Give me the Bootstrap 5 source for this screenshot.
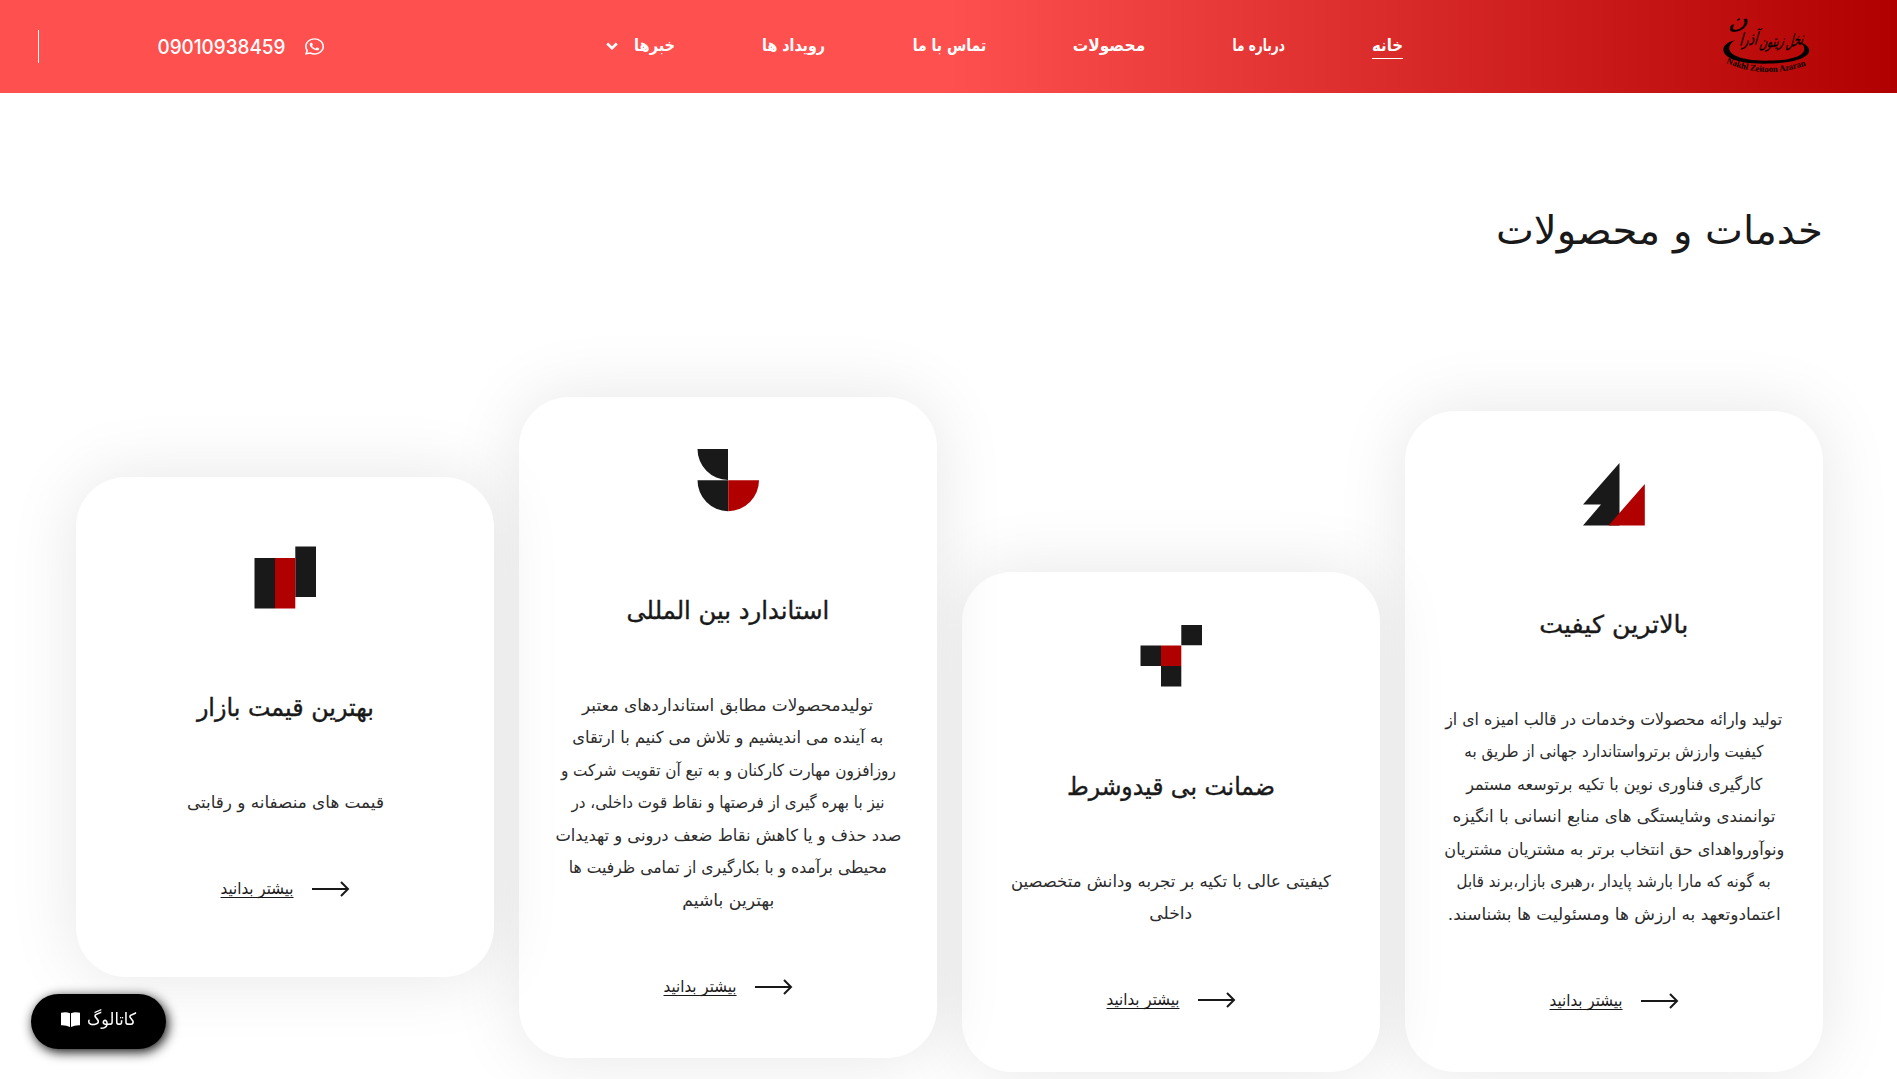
<!DOCTYPE html>
<html lang="fa" dir="rtl">
<head>
<meta charset="utf-8">
<title>خدمات و محصولات</title>
<link rel="stylesheet" href="https://cdn.jsdelivr.net/npm/bootstrap@5.3.0/dist/css/bootstrap.min.css">
<script src="https://cdn.jsdelivr.net/npm/bootstrap@5.3.0/dist/js/bootstrap.bundle.min.js"></script>
<style>
html,body{height:100%;overflow:hidden}
body{font-family:"DejaVu Sans Condensed","DejaVu Sans",sans-serif;color:#191919;background:#fff}
[data-w]{display:inline-block;transform-origin:right center;white-space:nowrap}
.topbar{height:93px;background:linear-gradient(to left,#b00000 0,#ff5050 50%);color:#fff;padding:0 85px 0 38px}
.brand-logo{width:92px;height:64px;margin-bottom:7px;overflow:visible}
.main-menu{gap:87px;margin-right:317px;font-size:16.6px;font-weight:700}
.main-menu a{color:#fff;display:flex;line-height:24px;border-bottom:1px solid transparent}
.main-menu a.current{border-color:#fff}
.chevron{width:12px;height:8px;margin:8px 17px 0 0}
.phone{font-family:Inter,sans-serif;font-size:20px;font-weight:500;line-height:24px;gap:20px;margin-left:118px}
.divider{width:1px;height:33px;background:#fff}
.services{padding:0 74px 0 76px}
.services h1{font-size:39px;font-weight:400;line-height:56px;margin:110px 0 138px}
.cards{gap:25px}
.service{width:418px;min-height:500px;border-radius:50px;background:#fff;box-shadow:0 0 70px rgba(0,0,0,.1);padding:52px 15px 54px}
.quality{margin-top:14px}.guarantee{margin-top:175px}.price{margin-top:80px}
.shape{width:62px;height:62px;overflow:visible}
.service h2{font-size:24.5px;line-height:40px;margin:79.5px 0 59px;font-weight:400;-webkit-text-stroke:.35px}
.service p{font-size:16.5px;line-height:32.5px;margin:0 0 52.5px;color:#2c2c2c}
.more{font-size:16px;line-height:34px;gap:18px;color:#191919;text-decoration:none}
.more span{text-decoration:underline;text-underline-offset:3px;text-decoration-thickness:1px;text-decoration-skip-ink:none}
.arrow{width:38px;height:16px}
.catalog{left:31px;bottom:30px;width:135px;height:55px;border-radius:28px;background:#000;color:#fff;font-size:17px;box-shadow:2px 3px 12px rgba(0,0,0,.95);gap:7px;padding-bottom:4px}
.catalog:hover{color:#fff}
</style>
</head>
<body>
<header class="topbar d-flex align-items-center">
<svg class="brand-logo flex-shrink-0" viewBox="1720 10 92 64" direction="rtl">
<path transform="translate(1700 0) scale(.3333)" d="M105 118C48 130 50 188 192 188C342 188 350 140 300 124C326 142 322 179 197 179C82 177 70 140 105 118Z"/>
<g font-family="DejaVu Sans Condensed,DejaVu Sans,sans-serif" text-anchor="middle" stroke="#000" stroke-width=".2">
<text transform="translate(1794 45) rotate(-14) skewX(-28) scale(.75 1)" font-size="16">نخل</text>
<text transform="translate(1771 46) rotate(-6) skewX(-24) scale(.85 1.15)" font-size="14">زیتون</text>
<text transform="translate(1748 44) rotate(-4) skewX(-20) scale(.8 1)" font-size="17">آذرا</text>
<text transform="translate(1738 27) rotate(-14) skewX(-24) scale(1.7 1)" font-size="19">ن</text>
</g>
<path id="arc" d="M1726 62Q1766 79 1807 64" fill="none"/>
<text direction="ltr" font-family="Liberation Serif,serif" font-weight="700" font-size="8.8"><textPath href="#arc" textLength="82" lengthAdjust="spacingAndGlyphs">Nakhl Zeitoon Azaran</textPath></text>
</svg>
<nav class="main-menu d-flex align-items-center">
<a class="current text-decoration-none" href="#"><span data-w="31">خانه</span></a>
<a class="text-decoration-none" href="#"><span data-w="52.5">درباره ما</span></a>
<a class="text-decoration-none" href="#"><span data-w="72.5">محصولات</span></a>
<a class="text-decoration-none" href="#"><span data-w="73.5">تماس با ما</span></a>
<a class="text-decoration-none" href="#"><span data-w="63">رویداد ها</span></a>
<a class="text-decoration-none" href="#"><span data-w="41">خبرها</span><svg class="chevron" viewBox="0 0 12 8"><path d="M1.200 1.500L6 6.200L10.800 1.500" fill="none" stroke="#fff" stroke-width="2.600"/></svg></a>
</nav>
<div class="phone d-flex align-items-center me-auto">
<svg width="19" height="19" viewBox="0 0 448 512" preserveAspectRatio="none" fill="#fff"><path d="M380.900 97.100C339 55.100 283.200 32 223.900 32c-122.400 0-222 99.600-222 222 0 39.100 10.200 77.300 29.600 111L0 480l117.700-30.900c32.400 17.700 68.900 27 106.100 27h.1c122.300 0 224.100-99.600 224.100-222 0-59.300-25.200-115-67.100-157zm-157 341.600c-33.200 0-65.700-8.900-94-25.700l-6.700-4-69.800 18.300L72 359.200l-4.400-7c-18.500-29.400-28.200-63.300-28.200-98.200 0-101.700 82.800-184.500 184.600-184.500 49.300 0 95.600 19.200 130.400 54.100 34.800 34.900 56.200 81.200 56.100 130.500 0 101.800-84.900 184.600-186.600 184.600zm101.200-138.200c-5.500-2.800-32.800-16.200-37.900-18-5.100-1.900-8.800-2.800-12.500 2.800-3.700 5.600-14.300 18-17.600 21.800-3.200 3.700-6.500 4.200-12 1.400-32.600-16.300-54-29.100-75.500-66-5.700-9.800 5.700-9.100 16.300-30.300 1.800-3.700.9-6.900-.5-9.700-1.400-2.800-12.500-30.100-17.100-41.200-4.500-10.800-9.100-9.300-12.500-9.500-3.200-.2-6.900-.2-10.600-.2-3.700 0-9.700 1.400-14.800 6.900-5.100 5.600-19.400 19-19.400 46.300 0 27.300 19.900 53.700 22.600 57.400 2.800 3.700 39.100 59.700 94.800 83.800 35.200 15.200 49 16.500 66.600 13.900 10.700-1.600 32.800-13.400 37.400-26.400 4.600-13 4.600-24.100 3.200-26.400-1.300-2.500-5-3.900-10.500-6.600z"/></svg>
<span data-w="128" dir="ltr">09010938459</span>
</div>
<div class="divider"></div>
</header>
<main class="services">
<h1><span data-w="327">خدمات و محصولات</span></h1>
<div class="cards d-flex align-items-start">
<section class="service quality d-flex flex-column align-items-center justify-content-center text-center">
<svg class="shape" viewBox="0 0 62 62"><path fill="#191919" d="M36.500 0V62.500H0L18 41.500H0Z"/><path fill="#b00000" d="M61.800 21V62.500H25.500Z"/></svg>
<h2><span data-w="149">بالاترین کیفیت</span></h2>
<p><span data-w="337">تولید وارائه محصولات وخدمات در قالب امیزه ای از</span><br><span data-w="299">کیفیت وارزش برترواستاندارد جهانی از طریق به</span><br><span data-w="296">کارگیری فناوری نوین با تکیه برتوسعه مستمر</span><br><span data-w="323">توانمندی وشایستگی های منابع انسانی با انگیزه</span><br><span data-w="340">ونوآورواهدای حق انتخاب برتر به مشتریان مشتریان</span><br><span data-w="314">به گونه که مارا بارشد پایدار ،رهبری بازار،برند قابل</span><br><span data-w="333">اعتمادوتعهد به ارزش ها ومسئولیت ها بشناسند.</span></p>
<a class="more d-flex align-items-center" href="#"><svg class="arrow" viewBox="0 0 38 16"><path d="M0 8H36M29 1L36 8L29 15" fill="none" stroke="#191919" stroke-width="2"/></svg><span data-w="73">بیشتر بدانید</span></a>
</section>
<section class="service guarantee d-flex flex-column align-items-center justify-content-center text-center">
<svg class="shape" viewBox="0 0 62 62"><path fill="#191919" d="M41.300 0H62V20.300H41.300ZM.5 20.500H21V41H.5ZM21 41H41.300V61.500H21Z"/><path fill="#b00000" d="M21 20.500H41.300V41H21Z"/></svg>
<h2><span data-w="208">ضمانت بی قیدوشرط</span></h2>
<p><span data-w="320">کیفیتی عالی با تکیه بر تجربه ودانش متخصصین</span><br><span data-w="43">داخلی</span></p>
<a class="more d-flex align-items-center" href="#"><svg class="arrow" viewBox="0 0 38 16"><path d="M0 8H36M29 1L36 8L29 15" fill="none" stroke="#191919" stroke-width="2"/></svg><span data-w="73">بیشتر بدانید</span></a>
</section>
<section class="service standard d-flex flex-column align-items-center justify-content-center text-center">
<svg class="shape" viewBox="0 0 62 62"><path fill="#191919" d="M.5 0H31V31A31 31 0 0 1 .5 0ZM.5 31.200H31V62.200A31 31 0 0 1 .5 31.200Z"/><path fill="#b00000" d="M31.200 31.200H62A31 31 0 0 1 31.200 62.200Z"/></svg>
<h2><span data-w="203">استاندارد بین المللی</span></h2>
<p><span data-w="291">تولیدمحصولات مطابق استانداردهای معتبر</span><br><span data-w="311">به آینده می اندیشیم و تلاش می کنیم با ارتقای</span><br><span data-w="335">روزافزون مهارت کارکنان و به تبع آن تقویت شرکت و</span><br><span data-w="313">نیز با بهره گیری از فرصتها و نقاط قوت داخلی، در</span><br><span data-w="346">صدد حذف و یا کاهش نقاط ضعف درونی و تهدیدات</span><br><span data-w="318">محیطی برآمده و با بکارگیری از تمامی ظرفیت ها</span><br><span data-w="92">بهترین باشیم</span></p>
<a class="more d-flex align-items-center" href="#"><svg class="arrow" viewBox="0 0 38 16"><path d="M0 8H36M29 1L36 8L29 15" fill="none" stroke="#191919" stroke-width="2"/></svg><span data-w="73">بیشتر بدانید</span></a>
</section>
<section class="service price d-flex flex-column align-items-center justify-content-center text-center">
<svg class="shape" viewBox="0 0 62 62"><path fill="#191919" d="M41.300 .5H62V51H41.300ZM.5 12H21V62.500H.5Z"/><path fill="#b00000" d="M21 12H41.300V62.500H21Z"/></svg>
<h2><span data-w="177">بهترین قیمت بازار</span></h2>
<p><span data-w="197">قیمت های منصفانه و رقابتی</span></p>
<a class="more d-flex align-items-center" href="#"><svg class="arrow" viewBox="0 0 38 16"><path d="M0 8H36M29 1L36 8L29 15" fill="none" stroke="#191919" stroke-width="2"/></svg><span data-w="73">بیشتر بدانید</span></a>
</section>
</div>
</main>
<a class="catalog position-fixed d-flex align-items-center justify-content-center text-decoration-none" href="#"><span data-w="49">کاتالوگ</span><svg width="19" height="15" viewBox="0 0 19 15"><path fill="#fff" d="M0 .8Q5-.4 9 1.200V15Q5 13 0 13.300ZM19 .8Q14-.4 10 1.200V15Q14 13 19 13.300Z"/></svg></a>
<script>
// Scale each line to its set width; the margin keeps the flow in step with the scaled text.
document.querySelectorAll('[data-w]').forEach(el => {
  const natural = el.getBoundingClientRect().width, target = +el.dataset.w;
  el.style.transform = `scaleX(${target / natural})`;
  el.style.marginLeft = `${target - natural}px`;
});
</script>
</body>
</html>
